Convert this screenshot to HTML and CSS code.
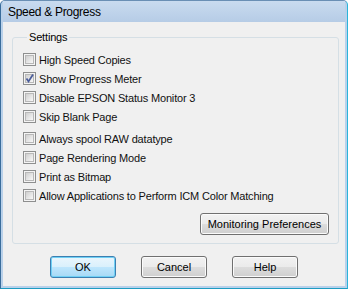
FILE: index.html
```html
<!DOCTYPE html>
<html lang="en">
<head>
  <meta charset="utf-8" />
  <title>Speed &amp; Progress</title>
  <link rel="stylesheet" href="styles.css">
</head>
<body>
<div class="dlg">
  <div class="dlg-title">Speed &amp; Progress</div>
  <div class="dlg-client">
    <fieldset class="dlg-group">
      <legend class="dlg-legend">Settings</legend>
      <div class="dlg-rows">
        <label class="dlg-row"><span class="dlg-check"></span>High Speed Copies</label>
        <label class="dlg-row"><span class="dlg-check is-on"><svg viewBox="0 0 13 13" width="13" height="13"><path d="M3.5 6.5 L5.5 9.5 L10 2.5" fill="none" stroke="#4a5c9a" stroke-width="1.7"/></svg></span>Show Progress Meter</label>
        <label class="dlg-row"><span class="dlg-check"></span>Disable EPSON Status Monitor 3</label>
        <label class="dlg-row"><span class="dlg-check"></span>Skip Blank Page</label>
        <label class="dlg-row dlg-row--gap"><span class="dlg-check"></span>Always spool RAW datatype</label>
        <label class="dlg-row"><span class="dlg-check"></span>Page Rendering Mode</label>
        <label class="dlg-row"><span class="dlg-check"></span>Print as Bitmap</label>
        <label class="dlg-row"><span class="dlg-check"></span>Allow Applications to Perform ICM Color Matching</label>
      </div>
      <div class="dlg-right">
        <button class="dlg-btn dlg-btn--wide" type="button">Monitoring Preferences</button>
      </div>
    </fieldset>
    <div class="dlg-buttons">
      <button class="dlg-btn dlg-btn--default" type="button">OK</button>
      <button class="dlg-btn" type="button">Cancel</button>
      <button class="dlg-btn" type="button">Help</button>
    </div>
  </div>
</div>
</body>
</html>
```

FILE: styles.css
```css
:root {
  --face: #f0f0f0;
  --frame: #b9d1ea;
  --text: #000;
}
html, body {
  margin: 0;
  padding: 0;
  background: #fff;
}
.dlg {
  width: 348px;
  height: 289px;
  box-sizing: border-box;
  border: 1px solid #3a6d9c;
  border-top-color: #6a8fb4;
  border-right-color: #2ab4da;
  border-bottom-color: #1d9cc2;
  border-radius: 5px 5px 0 0;
  background: var(--frame);
  padding: 0 2px 2px 2px;
  display: flex;
  flex-direction: column;
  font-family: "Liberation Sans", Arial, sans-serif;
  font-size: 11px;
  letter-spacing: -0.17px;
  color: var(--text);
}
.dlg-title {
  height: 21px;
  line-height: 22px;
  padding-left: 5px;
  font-size: 12px;
  letter-spacing: -0.3px;
  background: linear-gradient(#c9dbef, #b6cce6);
}
.dlg-client {
  flex: 1;
  background: var(--face);
  padding: 9px 6px 0 9px;
}
.dlg-group {
  margin: 0;
  padding: 6px 9px 8px 10px;
  min-width: 0;
  border: 1px solid #d5dfe5;
  border-radius: 3px;
}
.dlg-legend {
  margin-left: 4px;
  padding: 0 2px;
  line-height: 13px;
}
.dlg-rows {
  display: flex;
  flex-direction: column;
}
.dlg-row {
  height: 19px;
  display: flex;
  align-items: center;
  gap: 3px;
  white-space: nowrap;
  color: #111;
}
.dlg-row--gap {
  margin-top: 3px;
}
.dlg-check {
  width: 13px;
  height: 13px;
  box-sizing: border-box;
  border: 1px solid #8e8f8f;
  background: #f4f4f4;
  position: relative;
  flex: none;
}
.dlg-check::before {
  content: "";
  position: absolute;
  inset: 1px;
  border: 1px solid #b8b8b8;
  background: linear-gradient(135deg, #cfcfcf, #f8f8f8);
}
.dlg-check svg {
  position: absolute;
  left: -1px;
  top: -1px;
}
.dlg-right {
  display: flex;
  justify-content: flex-end;
  margin-top: 8px;
}
.dlg-btn {
  width: 66px;
  height: 22px;
  padding: 0;
  font: inherit;
  color: var(--text);
  border: 1px solid #707070;
  border-radius: 3px;
  background: linear-gradient(#f2f2f2 0%, #ebebeb 50%, #dddddd 50%, #cfcfcf 100%);
  box-shadow: inset 0 0 0 1px #fbfbfb;
}
.dlg-btn--wide {
  width: 129px;
}
.dlg-btn--default {
  border-color: #3c7fb1;
  background: linear-gradient(#eaf6fd 0%, #d9f0fc 50%, #bee6fd 50%, #a7d9f5 100%);
  box-shadow: inset 0 0 0 1px #6fd0f5;
}
.dlg-buttons {
  display: flex;
  gap: 25px;
  margin: 12px 0 0 38px;
}
```
